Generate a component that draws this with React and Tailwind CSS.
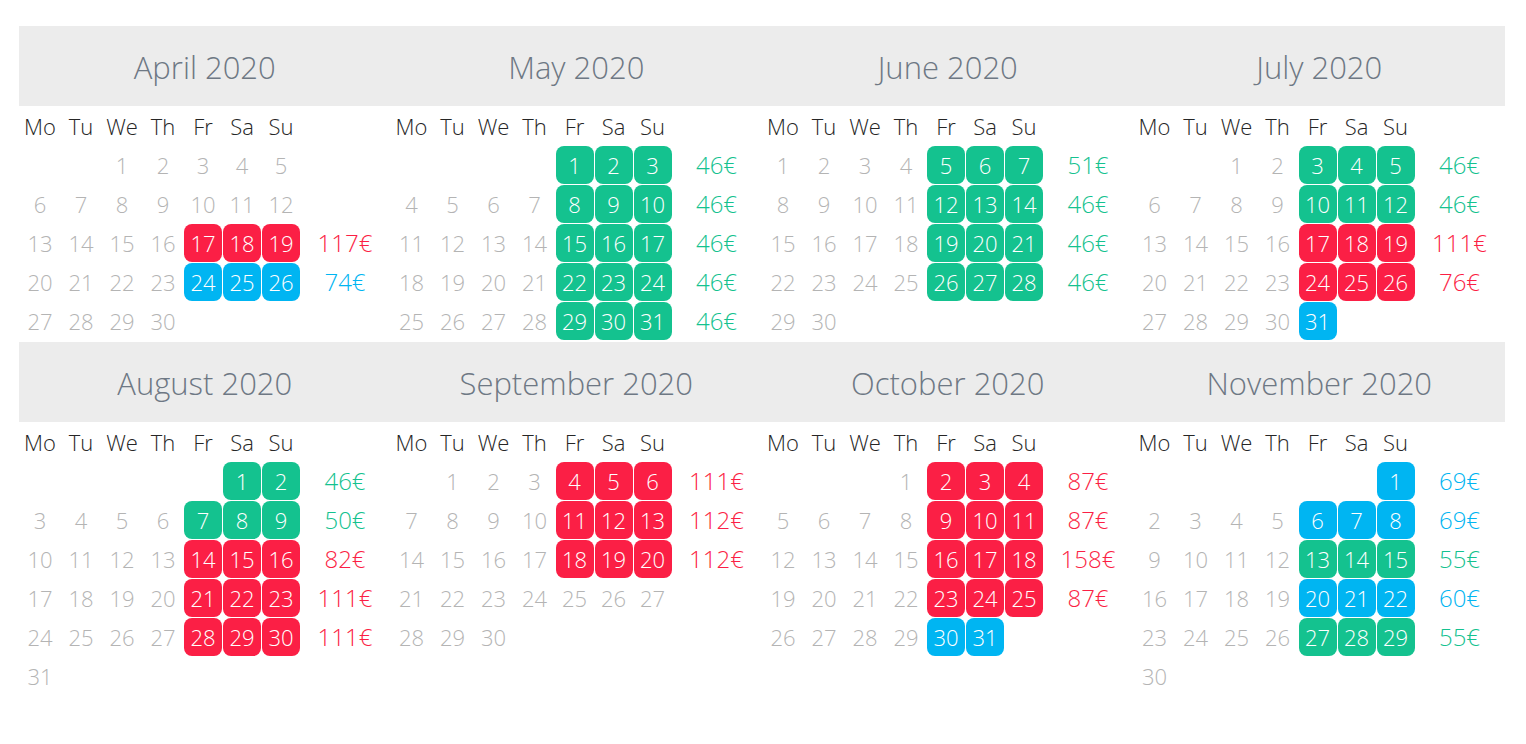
import React from 'react';

const colors = {
	r: { cell: 'bg-[#fb1f45] text-white', text: 'text-[#fb1f45]' },
	g: { cell: 'bg-[#14c28f] text-white', text: 'text-[#14c28f]' },
	b: { cell: 'bg-[#00b5f2] text-white', text: 'text-[#00b5f2]' },
};

// start: weekday index of the 1st (0 = Monday), marks: row -> [colour, price]
const sections = [
	[
		{ name: 'April 2020', start: 2, days: 30, marks: { 2: ['r', '117€'], 3: ['b', '74€'] } },
		{ name: 'May 2020', start: 4, days: 31, marks: { 0: ['g', '46€'], 1: ['g', '46€'], 2: ['g', '46€'], 3: ['g', '46€'], 4: ['g', '46€'] } },
		{ name: 'June 2020', start: 0, days: 30, marks: { 0: ['g', '51€'], 1: ['g', '46€'], 2: ['g', '46€'], 3: ['g', '46€'] } },
		{ name: 'July 2020', start: 2, days: 31, marks: { 0: ['g', '46€'], 1: ['g', '46€'], 2: ['r', '111€'], 3: ['r', '76€'], 4: ['b', ''] } },
	],
	[
		{ name: 'August 2020', start: 5, days: 31, marks: { 0: ['g', '46€'], 1: ['g', '50€'], 2: ['r', '82€'], 3: ['r', '111€'], 4: ['r', '111€'] } },
		{ name: 'September 2020', start: 1, days: 30, marks: { 0: ['r', '111€'], 1: ['r', '112€'], 2: ['r', '112€'] } },
		{ name: 'October 2020', start: 3, days: 31, marks: { 0: ['r', '87€'], 1: ['r', '87€'], 2: ['r', '158€'], 3: ['r', '87€'], 4: ['b', ''] } },
		{ name: 'November 2020', start: 6, days: 30, marks: { 0: ['b', '69€'], 1: ['b', '69€'], 2: ['g', '55€'], 3: ['b', '60€'], 4: ['g', '55€'] } },
	],
];

const weekdays = ['Mo', 'Tu', 'We', 'Th', 'Fr', 'Sa', 'Su'];
const gridCols = 'grid grid-cols-[40px_40px_40px_40px_38px_38px_38px_88px] gap-x-[1px] pl-[1px]';

const buildRows = (start, days, count) => {
	const rows = [];
	let d = 1 - start;
	for (let r = 0; r < count; r++) {
		const row = [];
		for (let c = 0; c < 7; c++) {
			row.push(d >= 1 && d <= days ? d : null);
			d++;
		}
		rows.push(row);
	}
	return rows;
};

const Month = ({ month, rowCount }) => {
	const rows = buildRows(month.start, month.days, rowCount);
	return (
		<div className="flex flex-col">
			<div className="h-[80px] bg-[#ececec] flex items-center justify-center text-[31px] text-[#6e7884] font-light pt-[2px]">
				{month.name}
			</div>
			<div className={`${gridCols} h-[40px] items-center`}>
				{weekdays.map((w) => (
					<div key={w} className="text-center text-[22px] text-[#262626] font-light">
						{w}
					</div>
				))}
			</div>
			<div className="flex flex-col gap-y-[1px]">
				{rows.map((row, ri) => {
					const mark = month.marks[ri];
					return (
						<div key={ri} className={`${gridCols} h-[38px]`}>
							{row.map((d, ci) => {
								const colored = mark && ci >= 4 && d;
								return (
									<div
										key={ci}
										className={`flex items-center justify-center text-[22px] font-light rounded-[8px] ${colored ? colors[mark[0]].cell : 'text-[#b4b4b4]'}`}
									>
										{d || ''}
									</div>
								);
							})}
							<div className={`flex items-center justify-center text-[24px] font-light ${mark ? colors[mark[0]].text : ''}`}>
								{mark ? mark[1] : ''}
							</div>
						</div>
					);
				})}
			</div>
		</div>
	);
};

export default function App() {
	return (
		<div className="min-h-screen bg-white pt-[26px] px-[19px]" style={{ fontFamily: '"Open Sans", "Noto Sans", sans-serif' }}>
			<div className="w-[1486px] flex flex-col gap-y-[2px]">
				{sections.map((sec, si) => (
					<div key={si} className="grid grid-cols-4">
						{sec.map((m) => (
							<Month key={m.name} month={m} rowCount={si === 0 ? 5 : 6} />
						))}
					</div>
				))}
			</div>
		</div>
	);
}
